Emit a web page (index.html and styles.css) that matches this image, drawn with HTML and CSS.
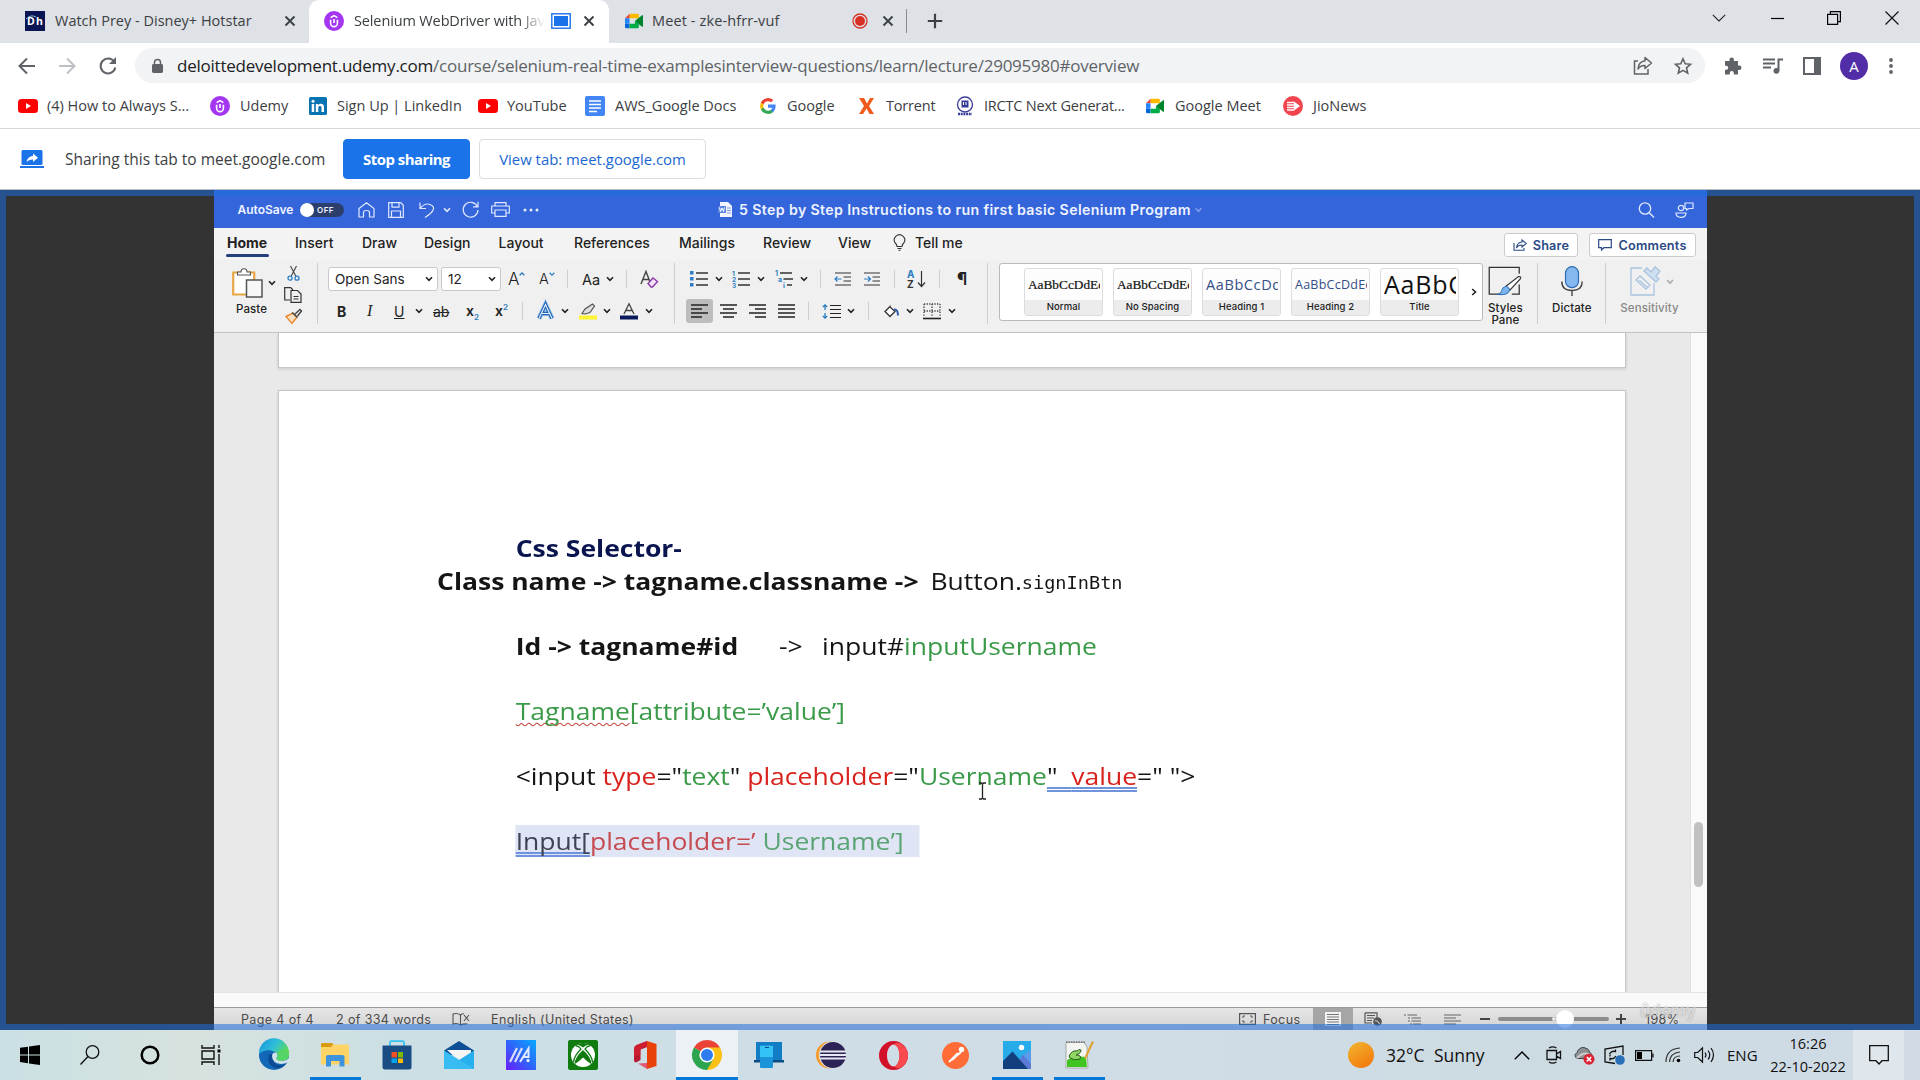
FILE: index.html
```html
<!DOCTYPE html>
<html lang="en">
<head>
<meta charset="utf-8">
<title>Selenium WebDriver with Java</title>
<link rel="stylesheet" href="styles.css">
</head>
<body>
<svg width="0" height="0" class="defs">
  <defs>
    <symbol id="chev" viewBox="0 0 8 6"><path d="M1 1.2 4 4.4 7 1.2" fill="none" stroke="currentColor" stroke-width="1.6"/></symbol>
    <symbol id="close" viewBox="0 0 12 12"><path d="M1.5 1.5l9 9M10.5 1.5l-9 9" fill="none" stroke="#3c4043" stroke-width="1.9"/></symbol>
    <symbol id="udemy" viewBox="0 0 20 20"><circle cx="10" cy="10" r="10" fill="#a435f0"/><path d="M6.6 8.800v3.400a3.400 3.400 0 0 0 6.800 0V8.800M6.600 6.600 10 4.600l3.400 2M10 8v4" fill="none" stroke="#fff" stroke-width="1.600"/></symbol>
    <symbol id="yt" viewBox="0 0 20 20"><rect y="3" width="20" height="14" rx="3.500" fill="#f00"/><path d="M8 7l5 3-5 3z" fill="#fff"/></symbol>
    <symbol id="meet" viewBox="0 0 20 20"><path d="M5 2h9q1.400 0 1.400 1.400V7H5z" fill="#ffba00"/><path d="M5 2v5H0z" fill="#ea4335"/><path d="M0 7h5v6H0z" fill="#2684fc"/><path d="M0 13h5v5H1.400Q0 18 0 16.600z" fill="#0066da"/><path d="M5 13h6v-3l4.400 3v3.600q0 1.400-1.400 1.400H5z" fill="#00ac47"/><path d="M11 10l8-6.400q1-.5 1 .6v11.600q0 1-1 .6z" fill="#00832d"/></symbol>
  </defs>
</svg>

<header class="tabstrip">
  <svg width="20" height="20" viewBox="0 0 20 20"><rect width="20" height="20" fill="#0b1553"/><text x="2" y="14" font-family="Open Sans, sans-serif" font-size="10.500" font-weight="700" fill="#fff" textLength="16">Dh</text><path d="M1 8q5-5 10-2" fill="none" stroke="#7db8e8"/></svg>
  <span class="tab-title t1">Watch Prey - Disney+ Hotstar</span>
  <svg width="12" height="12"><use href="#close"/></svg>
  <div class="active-tab">
    <svg width="20" height="20"><use href="#udemy"/></svg>
    <span class="tab-title t2">Selenium WebDriver with Java</span>
    <svg width="20" height="16" viewBox="0 0 20 16"><rect x=".8" y=".8" width="18.400" height="14.400" fill="#fff" stroke="#1a73e8" stroke-width="1.400"/><rect x="3" y="3" width="14" height="10" fill="#1a73e8"/></svg>
    <svg width="12" height="12"><use href="#close"/></svg>
  </div>
  <svg width="20" height="18"><use href="#meet"/></svg>
  <span class="tab-title t3">Meet - zke-hfrr-vuf</span>
  <svg width="16" height="16" viewBox="0 0 16 16"><circle cx="8" cy="8" r="7" fill="none" stroke="#d93025" stroke-width="1.300"/><circle cx="8" cy="8" r="5" fill="#d93025"/></svg>
  <svg width="12" height="12"><use href="#close"/></svg>
  <i class="tab-sep"></i>
  <svg width="16" height="16" viewBox="0 0 16 16"><path d="M8 .8v14.400M.8 8h14.400" stroke="#3c4043" stroke-width="2.200"/></svg>
  <svg class="win" width="14" height="8" viewBox="0 0 14 8"><path d="M.8.8 7 7 13.200.8" fill="none" stroke="#222" stroke-width="1.100"/></svg>
  <svg class="win" width="13" height="13" viewBox="0 0 13 13"><path d="M0 6.500h13" stroke="#000" stroke-width="1.200"/></svg>
  <svg class="win" width="14" height="14" viewBox="0 0 14 14"><path d="M.6 3.400h10v10H.6zM3.400 3V.6h10v10H11" fill="none" stroke="#000" stroke-width="1.200"/></svg>
  <svg class="win" width="14" height="14" viewBox="0 0 14 14"><path d="M.5.5l13 13M13.500.5l-13 13" stroke="#111" stroke-width="1.200"/></svg>
</header>

<nav class="toolbar">
  <svg width="18" height="18" viewBox="0 0 18 18"><path d="M17 9H2M9 1.500 1.500 9 9 16.500" fill="none" stroke="#5f6368" stroke-width="2"/></svg>
  <svg width="18" height="18" viewBox="0 0 18 18"><path d="M1 9h15M9 1.500 16.500 9 9 16.500" fill="none" stroke="#bdc1c6" stroke-width="2"/></svg>
  <svg width="18" height="18" viewBox="0 0 18 18"><path d="M15.300 5A7.400 7.400 0 1 0 16.300 10.500" fill="none" stroke="#5f6368" stroke-width="2"/><path d="M17 0v7h-7z" fill="#5f6368"/></svg>
  <div class="omnibox">
    <svg width="11" height="14" viewBox="0 0 11 14"><rect y="5" width="11" height="9" rx="1.400" fill="#5f6368"/><path d="M2.500 6V3.600a3 3 0 0 1 6 0V6" fill="none" stroke="#5f6368" stroke-width="1.500"/></svg>
    <span class="url"><b>deloittedevelopment.udemy.com</b>/course/selenium-real-time-examplesinterview-questions/learn/lecture/29095980#overview</span>
    <svg width="20" height="19" viewBox="0 0 20 19"><path d="M5 5H1.500v13H15v-5" fill="none" stroke="#5f6368" stroke-width="1.500"/><path d="M12 1.500 18.500 7 12 12.500V9.500Q7.500 9.300 5 13 5.500 5.500 12 4.700z" fill="none" stroke="#5f6368" stroke-width="1.500" stroke-linejoin="round"/></svg>
    <svg width="18" height="18" viewBox="0 0 18 18"><path d="M9 1.800l2.200 5 5.300.5-4 3.600 1.200 5.300L9 13.400l-4.700 2.800 1.200-5.300-4-3.600 5.300-.5z" fill="none" stroke="#5f6368" stroke-width="1.600"/></svg>
  </div>
  <svg width="18" height="18" viewBox="0 0 18 18"><path d="M1 4h4.500V2.600a2.200 2.200 0 0 1 4.400 0V4H14v4.500h1.300a2.200 2.200 0 0 1 0 4.400H14V17.500H9.800V16a2 2 0 0 0-4 0v1.500H1v-4.700h1.200a2 2 0 0 0 0-4H1z" fill="#5f6368"/></svg>
  <svg width="20" height="16" viewBox="0 0 20 16"><path d="M0 1.500h12M0 5.500h12M0 9.500h8M15.500 13V1.500H20" fill="none" stroke="#5f6368" stroke-width="2"/><circle cx="13.400" cy="12.800" r="2.900" fill="#5f6368"/></svg>
  <svg width="18" height="18" viewBox="0 0 18 18"><path d="M1 1h16v16H1z" fill="none" stroke="#5f6368" stroke-width="2"/><path d="M11 1h6v16h-6z" fill="#5f6368"/></svg>
  <span class="avatar">A</span>
  <svg width="4" height="16" viewBox="0 0 4 16"><g fill="#5f6368"><circle cx="2" cy="2" r="1.900"/><circle cx="2" cy="8" r="1.900"/><circle cx="2" cy="14" r="1.900"/></g></svg>
</nav>

<nav class="bookmarks">
  <svg width="20" height="20"><use href="#yt"/></svg><span class="b1">(4) How to Always S...</span>
  <svg width="20" height="20"><use href="#udemy"/></svg><span class="b2">Udemy</span>
  <svg width="18" height="18" viewBox="0 0 18 18"><rect width="18" height="18" rx="1.500" fill="#0a73b1"/><g fill="#fff"><path d="M2.700 7h2.500v8H2.700zM6.800 7h2.400v1.200C10.800 6 15 6.400 15 10v5h-2.500v-4.300c0-2.400-3.200-2.200-3.200 0V15H6.800z"/><circle cx="4" cy="4.200" r="1.500"/></g></svg><span class="b3">Sign Up | LinkedIn</span>
  <svg width="20" height="20"><use href="#yt"/></svg><span class="b4">YouTube</span>
  <svg width="20" height="20" viewBox="0 0 20 20"><rect width="20" height="20" rx="2" fill="#4285f4"/><path d="M4 5h12M4 8.500h12M4 12h12M4 15.500h8" stroke="#fff" stroke-width="1.700"/></svg><span class="b5">AWS_Google Docs</span>
  <svg width="16" height="16" viewBox="0 0 18 18"><path d="M17.600 9.200q0-.9-.2-1.800H9v3.500h4.800a4.100 4.100 0 0 1-1.800 2.700v2.200h2.900a8.800 8.800 0 0 0 2.700-6.600z" fill="#4285f4"/><path d="M9 18a8.600 8.600 0 0 0 6-2.200l-3-2.200A5.400 5.400 0 0 1 4 10.700H1V13a9 9 0 0 0 8 5z" fill="#34a853"/><path d="M4 10.700a5.400 5.400 0 0 1 0-3.400V5H1a9 9 0 0 0 0 8z" fill="#fbbc05"/><path d="M9 3.600c1.300 0 2.500.5 3.400 1.300L15 2.300A9 9 0 0 0 1 5l3 2.300A5.400 5.400 0 0 1 9 3.600z" fill="#ea4335"/></svg><span class="b6">Google</span>
  <svg width="15" height="16" viewBox="0 0 15 16"><path d="M0 0h5l3 5.500L11 0h4l-5 8 5 8h-4.500L7.500 10.500 4 16H0l5-8z" fill="#f05a1a"/></svg><span class="b7">Torrent</span>
  <svg width="20" height="20" viewBox="0 0 20 20"><circle cx="10" cy="8.500" r="7.500" fill="#fff" stroke="#3b3f98" stroke-width="1.300"/><path d="M6.500 4.500h7v7h-7z" fill="#343a95"/><path d="M8 6h1v3H8zm2.500 0h1v3h-1z" fill="#fff"/><path d="M3 18h14" stroke="#3b3f98" stroke-width="2.500" stroke-dasharray="2 .7"/></svg><span class="b8">IRCTC Next Generat...</span>
  <svg width="20" height="18"><use href="#meet"/></svg><span class="b9">Google Meet</span>
  <svg width="20" height="20" viewBox="0 0 20 20"><circle cx="10" cy="10" r="10" fill="#f0444f"/><path d="M4 6.500h7M4 9h7M4 11.500h7M4 14h7" stroke="#fff" stroke-width="1.400"/><path d="M11 5.500 17 10l-6 4.500z" fill="#fff"/></svg><span class="b10">JioNews</span>
</nav>

<section class="infobar">
  <svg width="24" height="18" viewBox="0 0 24 18"><rect x="1.500" width="21" height="15" rx="1.500" fill="#1a73e8"/><path d="M0 16h24v2H0z" fill="#1a73e8"/><path d="M13 3.500l5 4.300-5 4.200V9.500q-4-.3-6.500 2.500Q7.500 6.500 13 6z" fill="#fff"/></svg>
  <span class="share-note">Sharing this tab to meet.google.com</span>
  <button class="btn primary"><span>Stop sharing</span></button>
  <button class="btn"><span>View tab: meet.google.com</span></button>
</section>

<main class="stage">
  <div class="word">
    <div class="titlebar">
      <span class="autosave">AutoSave</span>
      <span class="toggle"><i></i>OFF</span>
      <svg width="17" height="16" viewBox="0 0 17 16"><path d="M1 6.500 8.500.8 16 6.500V15h-4.500v-4.500q0-2-3-2t-3 2V15H1z" fill="none" stroke="#dfe8ff" stroke-width="1.200"/></svg>
      <svg width="16" height="16" viewBox="0 0 16 16"><path d="M.7.7h12l2.600 2.600v12H.7zM4 .7v4.500h7V.7M3.500 15V9h9v6" fill="none" stroke="#dfe8ff" stroke-width="1.200"/></svg>
      <svg width="16" height="16" viewBox="0 0 16 16"><path d="M1 .5V6.500H7M1 6.500Q6 .5 11 2.500T14 8Q13 11 6 15.500" fill="none" stroke="#dfe8ff" stroke-width="1.200"/></svg>
      <svg class="pale" width="8" height="6"><use href="#chev"/></svg>
      <svg width="17" height="17" viewBox="0 0 17 17"><path d="M15.300 5.500A7.400 7.400 0 1 0 16 9M16 .8v5h-5" fill="none" stroke="#dfe8ff" stroke-width="1.200"/></svg>
      <svg width="19" height="15" viewBox="0 0 19 15"><path d="M4 4V.7h11V4M4 11H.7V4h17.600v7H15M4 8h11v6.300H4z" fill="none" stroke="#dfe8ff" stroke-width="1.200"/></svg>
      <svg width="16" height="4" viewBox="0 0 16 4"><g fill="#e8efff"><circle cx="2" cy="2" r="1.500"/><circle cx="8" cy="2" r="1.500"/><circle cx="14" cy="2" r="1.500"/></g></svg>
      <svg width="14" height="15" viewBox="0 0 14 15"><path d="M2 0h8l4 4v11H2z" fill="#f2f5ff"/><rect y="4" width="8" height="7" fill="#5d86df"/><path d="M1.500 5.500l1 4L4 6l1.500 3.500 1-4" fill="none" stroke="#fff"/><path d="M9 6h4M9 8.500h4M9 11h4" stroke="#7c9be6"/></svg>
      <b class="doc-title">5 Step by Step Instructions to run first basic Selenium Program</b>
      <svg class="faint" width="9" height="6"><use href="#chev"/></svg>
      <svg width="17" height="16" viewBox="0 0 17 16"><circle cx="7" cy="6.500" r="5.700" fill="none" stroke="#dfe8ff" stroke-width="1.300"/><path d="M11 10.500l5 5" stroke="#dfe8ff" stroke-width="1.400"/></svg>
      <svg width="19" height="16" viewBox="0 0 19 16"><g fill="none" stroke="#dfe8ff" stroke-width="1.200"><circle cx="6" cy="6" r="2.700"/><path d="M1 11h10q0 4.300-5 4.300T1 11zM10 1h8v5.500h-4L11.500 8V6.500H10z"/></g></svg>
    </div>
    <div class="ribbon-tabs">
      <b class="cur">Home</b><span>Insert</span><span>Draw</span><span>Design</span><span>Layout</span><span>References</span><span>Mailings</span><span>Review</span><span>View</span>
      <svg width="13" height="16" viewBox="0 0 13 16"><path d="M4 11.500Q4 9.500 2.200 8A5.200 5.200 0 1 1 10.800 8Q9 9.500 9 11.500zM4.500 13.500h4M5.500 15.300h2" fill="none" stroke="#333" stroke-width="1.100"/></svg>
      <span>Tell me</span>
      <button class="wbtn"><svg width="14" height="12" viewBox="0 0 14 12"><path d="M1 4v7.300h10V9M9 1l4.300 3.500L9 8V6Q5 6 3.500 9 4 3.500 9 3z" fill="none" stroke="#2b4a86" stroke-width="1.100"/></svg>Share</button>
      <button class="wbtn"><svg width="14" height="12" viewBox="0 0 14 12"><path d="M.7.7h12.600v8H6L3.500 11V8.700H.7z" fill="none" stroke="#2b4a86" stroke-width="1.200"/></svg>Comments</button>
    </div>
    <div class="ribbon">
      <div class="g-paste">
        <svg width="31" height="30" viewBox="0 0 31 30"><path d="M1.200 4.500h21v22h-21z" fill="#fff" stroke="#e8a646" stroke-width="2.200"/><path d="M5.500 7V4H9q0-3.200 3-3.200T15 4h3.500v3z" fill="#fff" stroke="#555" stroke-width="1.100"/><path d="M14.500 12h15.500v17H14.500z" fill="#f7f7f7" stroke="#555" stroke-width="1.500"/></svg>
        <svg width="8" height="6"><use href="#chev"/></svg>
        <span class="cap">Paste</span>
      </div>
      <div class="g-clip">
        <svg width="13" height="15" viewBox="0 0 13 15"><path d="M3.500 0 9 10.500M9.500 0 4 10.500" stroke="#444" stroke-width="1.100"/><g fill="none" stroke="#2b7dc4" stroke-width="1.300"><circle cx="3" cy="12.200" r="2"/><circle cx="10" cy="12.200" r="2"/></g></svg>
        <svg width="18" height="16" viewBox="0 0 18 16"><path d="M6 13H.7V.7h6L9 3M7 3.500h6.500L17 7v8.300H7z" fill="none" stroke="#333" stroke-width="1.200"/><path d="M9.500 9.500h5M9.500 12h5" stroke="#333"/></svg>
        <svg width="18" height="15" viewBox="0 0 18 15"><path d="M2 7.500 9 4l4 4-5 6.500z" fill="#fbe0c0" stroke="#e8892f" stroke-width="1.400"/><path d="M8 3.500l5.500 5M11 5l5-4.500 1.500 1.500-4 5" fill="none" stroke="#444" stroke-width="1.400"/></svg>
      </div>
      <i class="vsep big"></i>
      <div class="g-font">
        <div class="row r-font1">
          <span class="combo">Open Sans<svg width="8" height="6"><use href="#chev"/></svg></span>
          <span class="combo">12<svg width="8" height="6"><use href="#chev"/></svg></span>
          <span class="ic">A<svg width="6" height="4" viewBox="0 0 6 4"><path d="M.6 3.300 3 1l2.400 2.300" fill="none" stroke="#2b7dc4" stroke-width="1.300"/></svg></span>
          <span class="ic sm">A<svg width="6" height="4" viewBox="0 0 6 4"><path d="M.6.8 3 3.100 5.400.8" fill="none" stroke="#2b7dc4" stroke-width="1.300"/></svg></span>
          <i class="vsep"></i>
          <span class="aa">Aa</span>
          <svg width="8" height="6"><use href="#chev"/></svg>
          <i class="vsep"></i>
          <svg width="19" height="18" viewBox="0 0 19 18"><path d="M1 14 6 1.500 10 12M2.500 9.500H9" fill="none" stroke="#444" stroke-width="1.400"/><path d="M8 13.500l5-5.500 4.500 3.500-5 5.500H11z" fill="#f3e3f8" stroke="#8e3ba6" stroke-width="1.400"/></svg>
        </div>
        <div class="row r-font2">
          <b class="fb">B</b><i class="fi">I</i><u class="fu">U</u>
          <svg width="8" height="6"><use href="#chev"/></svg>
          <s class="fs">ab</s>
          <b class="fx">x<sub>2</sub></b><b class="fx">x<sup>2</sup></b>
          <i class="vsep"></i>
          <svg width="17" height="17" viewBox="0 0 17 17"><path d="M2 15.500 8.500 1.500 15 15.500M5 10.500h7" fill="none" stroke="#9cc6f1" stroke-width="5"/><path d="M2 15.500 8.500 1.500 15 15.500M5 10.500h7" fill="none" stroke="#2768b5" stroke-width="3.400"/><path d="M2 15.500 8.500 1.500 15 15.500M5 10.500h7" fill="none" stroke="#e8f2fc" stroke-width="1.100"/></svg>
          <svg width="8" height="6"><use href="#chev"/></svg>
          <svg width="18" height="17" viewBox="0 0 18 17"><path d="M3 10.500 6 6 13.500 1l2 2L11 9.500 6 11z" fill="#ddd" stroke="#555" stroke-width="1.200"/><path d="M0 12.500h18v4H0z" fill="#fdf434"/></svg>
          <svg width="8" height="6"><use href="#chev"/></svg>
          <svg width="18" height="17" viewBox="0 0 18 17"><path d="M4 11 9 .8 14 11M5.500 7.500h7" fill="none" stroke="#444" stroke-width="1.300"/><path d="M0 12.500h18v4H0z" fill="#0b1a5e"/></svg>
          <svg width="8" height="6"><use href="#chev"/></svg>
        </div>
      </div>
      <i class="vsep big"></i>
      <div class="g-para">
        <div class="row r-para1">
          <svg width="18" height="16" viewBox="0 0 18 16"><path d="M0 0h3.500v3.500H0zM0 6h3.500v3.500H0zM0 12h3.500v3.500H0z" fill="#2b7dc4"/><path d="M6 2h12M6 8h12M6 14h12" stroke="#333" stroke-width="1.300"/></svg>
          <svg width="8" height="6"><use href="#chev"/></svg>
          <svg width="18" height="17" viewBox="0 0 18 17"><g fill="#2b7dc4" font-family="Inter, sans-serif" font-size="6.500" font-weight="700"><text x="0" y="5">1</text><text x="0" y="11">2</text><text x="0" y="17">3</text></g><path d="M6 2h12M6 8h12M6 14h12" stroke="#333" stroke-width="1.300"/></svg>
          <svg width="8" height="6"><use href="#chev"/></svg>
          <svg width="18" height="17" viewBox="0 0 18 17"><g fill="#2b7dc4" font-family="Inter, sans-serif" font-size="7" font-weight="700"><text x="0" y="5">1</text><text x="3" y="11">a</text><text x="8" y="17">i</text></g><path d="M5 2h12M8.500 8H18M12 14h5" stroke="#333" stroke-width="1.300"/></svg>
          <svg width="8" height="6"><use href="#chev"/></svg>
          <i class="vsep"></i>
          <svg width="17" height="14" viewBox="0 0 17 14"><path d="M1 1h16M9.500 5H17M9.500 9H17M1 13h16" stroke="#333" stroke-width="1.200"/><path d="M7.500 7H1M3.500 4.500 1 7l2.500 2.500" fill="none" stroke="#2b7dc4" stroke-width="1.200"/></svg>
          <svg width="17" height="14" viewBox="0 0 17 14"><path d="M1 1h16M9.500 5H17M9.500 9H17M1 13h16" stroke="#333" stroke-width="1.200"/><path d="M1 7h6.500M5 4.500 7.500 7 5 9.500" fill="none" stroke="#2b7dc4" stroke-width="1.200"/></svg>
          <i class="vsep"></i>
          <svg width="19" height="18" viewBox="0 0 19 18"><g font-family="Inter, sans-serif" font-size="10" font-weight="700"><text x="0" y="8" fill="#2b7dc4">A</text><text x="0" y="17.500" fill="#333">Z</text></g><path d="M14.500 1v15M11 12.500l3.500 4 3.500-4" fill="none" stroke="#333" stroke-width="1.200"/></svg>
          <i class="vsep"></i>
          <span class="pil">¶</span>
        </div>
        <div class="row r-para2">
          <span class="on"><svg width="18" height="14" viewBox="0 0 18 14"><path d="M0 1h17M0 5h11M0 9h17M0 13h11" stroke="#222" stroke-width="1.300"/></svg></span>
          <svg width="17" height="14" viewBox="0 0 17 14"><path d="M0 1h17M3 5h11M0 9h17M3 13h11" stroke="#222" stroke-width="1.300"/></svg>
          <svg width="17" height="14" viewBox="0 0 17 14"><path d="M0 1h17M6 5h11M0 9h17M6 13h11" stroke="#222" stroke-width="1.300"/></svg>
          <svg width="17" height="14" viewBox="0 0 17 14"><path d="M0 1h17M0 5h17M0 9h17M0 13h17" stroke="#222" stroke-width="1.300"/></svg>
          <i class="vsep"></i>
          <svg width="19" height="15" viewBox="0 0 19 15"><path d="M8 1.500h11M8 5.500h11M8 9.500h11M8 13.500h11" stroke="#222" stroke-width="1.200"/><path d="M3 6V1M.8 3 3 .8 5.200 3M3 9v5M.8 12 3 14.200 5.200 12" fill="none" stroke="#2b7dc4" stroke-width="1.300"/></svg>
          <svg width="8" height="6"><use href="#chev"/></svg>
          <i class="vsep"></i>
          <svg width="15" height="13" viewBox="0 0 15 13"><path d="M5.500 2 1 6.500 6 11.500 11 6.500 6 2V.5" fill="#fff" stroke="#333" stroke-width="1.300"/><path d="M10 4.500q4-.5 4 6" fill="none" stroke="#2a5da8" stroke-width="2"/></svg>
          <svg width="8" height="6"><use href="#chev"/></svg>
          <svg width="18" height="17" viewBox="0 0 18 17"><path d="M1 1h16M1 8h16M1 1v13M9 1v13M17 1v13" fill="none" stroke="#444" stroke-width="1.300" stroke-dasharray="1.300 1.300"/><path d="M0 15.500h18" stroke="#222" stroke-width="1.600"/></svg>
          <svg width="8" height="6"><use href="#chev"/></svg>
        </div>
      </div>
      <i class="vsep big"></i>
      <div class="gallery">
        <div class="card"><span class="smp serif">AaBbCcDdEe</span><span class="lbl">Normal</span></div>
        <div class="card"><span class="smp serif">AaBbCcDdEe</span><span class="lbl">No Spacing</span></div>
        <div class="card"><span class="smp h1">AaBbCcDd</span><span class="lbl">Heading 1</span></div>
        <div class="card"><span class="smp h2">AaBbCcDdEe</span><span class="lbl">Heading 2</span></div>
        <div class="card"><span class="smp ttl">AaBbC</span><span class="lbl">Title</span></div>
        <svg width="6" height="8" viewBox="0 0 6 8"><path d="M1.200 1 4.500 4 1.200 7" fill="none" stroke="#222" stroke-width="1.600"/></svg>
      </div>
      <div class="tall">
        <svg width="34" height="31" viewBox="0 0 34 31"><path d="M15 29H.7V1.500h31V8M31.700 19v10H24" fill="none" stroke="#333" stroke-width="1.300"/><path d="M18 21 31 11q3-.5 2 2L22 25z" fill="#fff" stroke="#333" stroke-width="1.200"/><path d="M9 29.500q4-.5 4.500-4T18 21q4 1 3.500 4.500-1 5-12.500 4z" fill="#7db4ec" stroke="#2b6cb5"/></svg>
        <span class="cap">Styles<br>Pane</span>
      </div>
      <i class="vsep big"></i>
      <div class="tall">
        <svg width="22" height="30" viewBox="0 0 22 30"><rect x="4.500" y=".7" width="13" height="21" rx="6.500" fill="#85b8ee" stroke="#2b6cb5" stroke-width="1.200"/><path d="M.8 15.500q0 9 10.200 9t10.200-9M11 24.500V30" fill="none" stroke="#444" stroke-width="1.400"/></svg>
        <span class="cap">Dictate</span>
      </div>
      <i class="vsep big"></i>
      <div class="tall dis">
        <svg width="50" height="30" viewBox="0 0 50 30"><g fill="none" stroke="#a9c4df" stroke-width="1.300"><path d="M12 2H1v27h23V17"/><path d="M6 14l4-4 10 9-4 4zM9 14l8 7"/><path d="M14 5l3-3 4 4 4-5 5 4-4 5 3 3-3 3z" fill="#cfe0f0"/></g><path d="M37 14l3 3 3-3" fill="none" stroke="#aaa" stroke-width="1.600"/></svg>
        <span class="cap">Sensitivity</span>
      </div>
    </div>
    <div class="canvas">
      <div class="pages">
        <div class="page first"></div>
        <div class="page second">
          <div class="body-text">
            <p class="in navy"><b>Css Selector-</b></p>
            <p class="l2"><b>Class name -&gt; tagname.classname -&gt;</b><span>Button.</span><code>signInBtn</code></p>
            <p class="in l3"><b>Id -&gt; tagname#id</b><span>-&gt;</span><span>input#<em>inputUsername</em></span></p>
            <p class="in"><em><span class="wavy">Tagname</span>[attribute=’value’]</em></p>
            <p class="in">&lt;input <strong>type</strong>="<em>text</em>" <strong>placeholder</strong>="<em>Username</em><span class="dbl">"  <strong>value</strong></span>=" "&gt;</p>
            <p class="in"><span class="sel"><span class="dbl">Input[</span><strong>placeholder=’</strong> <em>Username’]</em></span></p>
          </div>
          <svg class="ibeam" width="9" height="18" viewBox="0 0 9 18"><path d="M1 1h2.500l1 1 1-1H8M4.500 2v14M1 17h2.500l1-1 1 1H8" fill="none" stroke="#222" stroke-width="1.300"/></svg>
        </div>
      </div>
      <div class="vscroll"><i></i></div>
    </div>
    <div class="hscroll"></div>
    <div class="status">
      <span class="s1">Page 4 of 4</span><span class="s2">2 of 334 words</span>
      <svg width="19" height="13" viewBox="0 0 19 13"><path d="M8.500 2Q5-.5 1 1v10q4-1.500 7.500 1zM8.500 2Q10 .5 12 .7M8.500 12q3-1.500 7-1" fill="none" stroke="#555" stroke-width="1.100"/><path d="M12 2l5 6M17 2l-5 6" stroke="#555" stroke-width="1.100"/></svg>
      <span class="s3">English (United States)</span>
      <svg width="17" height="12" viewBox="0 0 17 12"><path d="M.6.6h15.800v10.800H.6z" fill="none" stroke="#555" stroke-width="1.200"/><path d="M4 5V3h2M11 3h2v2M13 7v2h-2M6 9H4V7" fill="none" stroke="#555"/></svg>
      <span class="s4">Focus</span>
      <span class="view-on"><svg width="16" height="14" viewBox="0 0 16 14"><path d="M0 0h16v14H0z" fill="#f2f2f2"/><path d="M2 2.500h12M2 5h12M2 7.500h12M2 10h12M2 12.500h12" stroke="#777"/></svg></span>
      <svg width="19" height="14" viewBox="0 0 19 14"><path d="M1 .8h12v5M1 .8V11h7" fill="none" stroke="#555" stroke-width="1.200"/><path d="M3 3.500h8M3 6h7M3 8.500h5" stroke="#555"/><circle cx="13.500" cy="9.500" r="4.300" fill="#555"/><path d="M11 8.500l3 1 1.500 2.500" stroke="#ddd" fill="none"/></svg>
      <svg width="17" height="11" viewBox="0 0 17 11"><path d="M0 1h2M3.500 1H13M4 4h2M7.500 4H17M4 7h2M7.500 7H17M6 10h2M9 10h8" stroke="#666" stroke-width="1.200"/></svg>
      <svg width="17" height="11" viewBox="0 0 17 11"><path d="M0 1h17M0 4h12M0 7h17M0 10h12" stroke="#666" stroke-width="1.200"/></svg>
      <svg width="10" height="4" viewBox="0 0 10 4"><path d="M0 2h10" stroke="#444" stroke-width="2"/></svg>
      <svg width="111" height="18" viewBox="0 0 111 18"><path d="M2 9h107" stroke="#8b8b8b" stroke-width="4" stroke-linecap="round"/><circle cx="56" cy="9" r="2" fill="#e6e6e6"/><circle cx="67" cy="9" r="9" fill="#fff"/></svg>
      <svg width="10" height="10" viewBox="0 0 10 10"><path d="M0 5h10M5 0v10" stroke="#444" stroke-width="2"/></svg>
      <span class="s5">198%</span>
    </div>
    <span class="mark">ûdemy</span>
  </div>
  <div class="share-frame"></div>
</main>

<footer class="taskbar">
  <div class="cell"><svg width="20" height="20" viewBox="0 0 20 20"><path d="M0 2.800 8 1.700v7.700H0zM9 1.500 20 0v9.400H9zM0 10.400h8v7.800L0 17zM9 10.400h11V20L9 18.500z"/></svg></div>
  <div class="cell"><svg width="20" height="20" viewBox="0 0 20 20"><circle cx="12.500" cy="7" r="6.300" fill="none" stroke="#111" stroke-width="1.300"/><path d="M8 11.500.5 19.500" stroke="#111" stroke-width="1.400"/></svg></div>
  <div class="cell"><svg width="20" height="20" viewBox="0 0 20 20"><circle cx="10" cy="10" r="8.300" fill="none" stroke="#000" stroke-width="2.500"/></svg></div>
  <div class="cell"><svg width="21" height="20" viewBox="0 0 21 20"><path d="M1 0v3h12V0M1 20v-3h12v3M1 6h12v8H1zM18 0v3M18 9v11" fill="none" stroke="#111" stroke-width="1.400"/><path d="M16.500 4.500h3v3h-3z"/></svg></div>
  <div class="cell"><svg width="30" height="30" viewBox="0 0 30 30"><defs><linearGradient id="e1" x2="1" y2=".5"><stop offset="0" stop-color="#1a8fe0"/><stop offset=".55" stop-color="#2fc0d8"/><stop offset="1" stop-color="#5fdc50"/></linearGradient></defs><circle cx="15" cy="15" r="15" fill="#1268b8"/><path d="M0 13.500A15 15 0 0 1 30 13q.5 6.500-6 7.500-6 .5-6.500-2.200Q20 15 17 12.500 9 7 0 13.500z" fill="url(#e1)"/><path d="M10 15q-3 10 7 13 6 1 11-5-6 4-11 1-4-3-3-8.500Q12 13 10 15z" fill="#0c4a94"/><path d="M17.500 12.700q-4-.7-4.500 3.300 0 7 9 8 4 0 7-2l1 1v-5q-2.500 3-7 2.700-6-.2-5.500-2.700 2-2.700 0-5.300z" fill="#cfe1e8"/><path d="M30 14q0 6-6 6.500-6.500.5-6.500-2 3-3 0-6L24 9z" fill="#55d566"/></svg></div>
  <div class="cell run"><svg width="28" height="24" viewBox="0 0 28 24"><path d="M0 1.500Q0 0 1.500 0H11l2 2-1.500 3H0z" fill="#d99a0b"/><path d="M0 4h10l2-2.500h14.500Q28 1.500 28 3v18.500H0z" fill="#ffd466"/><path d="M5 23.500V14q0-2 2-2h14.500q2 0 2 2v9.500h-5V18H10v5.500z" fill="#3d94dc"/></svg></div>
  <div class="cell"><svg width="30" height="30" viewBox="0 0 30 30"><path d="M8 6V2.500Q8 1.200 9.300 1.200h11.400q1.300 0 1.300 1.300V6" fill="none" stroke="#37c1f2" stroke-width="1.800"/><path d="M.5 5.500h29V27q0 2.500-2.500 2.500H3Q.5 29.500.5 27z" fill="#1b4d85"/><path d="M9.500 12H15v5.500H9.500z" fill="#f25022"/><path d="M16 12h5v5.500h-5z" fill="#7fba00"/><path d="M9.500 18.500H15V23H9.500z" fill="#00a4ef"/><path d="M16 18.500h5V23h-5z" fill="#ffb900"/></svg></div>
  <div class="cell"><svg width="30" height="28" viewBox="0 0 30 28"><path d="M0 9.500 15 0l15 9.500V14H0z" fill="#0d4f94"/><path d="M3 9h24v8l-12 3z" fill="#f5f5f5"/><path d="M0 9.500 15 19l15-9.500V28H0z" fill="#28b0ee"/><path d="M0 9.500 30 28H0z" fill="#45c5f8" opacity=".6"/></svg></div>
  <div class="cell"><svg width="30" height="30" viewBox="0 0 30 30"><defs><linearGradient id="a1" x1="0" y1="1" x2="1" y2="0"><stop offset="0" stop-color="#6a1cf8"/><stop offset=".5" stop-color="#2f66fa"/><stop offset="1" stop-color="#06a8ff"/></linearGradient></defs><path d="M0 0h30v30H0z" fill="url(#a1)"/><path d="M4 22 11 8M9 22 16 8" stroke="#d5ddff" stroke-width="2.200"/><path d="M14 22 22.500 8.500V18M18 17h4" fill="none" stroke="#e5ebff" stroke-width="2"/><circle cx="22" cy="20.500" r="1.600" fill="#fff"/></svg></div>
  <div class="cell"><svg width="30" height="30" viewBox="0 0 30 30"><rect width="30" height="30" rx="2" fill="#107c10"/><circle cx="15" cy="15" r="12" fill="#fff"/><path d="M7.500 5q3.500-1 7.500 2.500Q19 4 22.500 5L15 2.500zM15 10q-8 7-8.500 14 1.500 0 8.500-6.500Q22 24 23.500 24 23 17 15 10z" fill="#107c10"/><path d="M7.500 5.500Q11 6 13 9 6 16 5.500 22M22.500 5.500Q19 6 17 9q7 7 7.500 13" fill="none" stroke="#107c10" stroke-width="1.300"/></svg></div>
  <div class="cell"><svg width="23" height="28" viewBox="0 0 23 28"><path d="M13 0l9.500 3v22L13 28z" fill="#e8420a"/><path d="M13 0v6L6.500 8.500V19L2 21.500Q0 21 0 19V8Q0 5 2.500 4z" fill="#b7172e"/><path d="M4 22.500 13 22v6z" fill="#e05a78"/><path d="M13 0v6L6.500 8.500V14L0 15V8Q0 5 2.500 4z" fill="#d23" opacity=".6"/></svg></div>
  <div class="cell cur"><svg width="30" height="30" viewBox="0 0 30 30"><path d="M15 15 2 7.500A15 15 0 0 1 28 7.500z" fill="#ea4335"/><path d="M15 15V7.500h13A15 15 0 0 1 15 30z" fill="#fbc116"/><path d="M2 7.500A15 15 0 0 0 15 30l6.500-11.300L15 15z" fill="#2da44e"/><circle cx="15" cy="15" r="7.600" fill="#fff"/><circle cx="15" cy="15" r="6" fill="#2f7cf0"/></svg></div>
  <div class="cell"><svg width="30" height="26" viewBox="0 0 30 26"><path d="M2 0h26v20H2z" fill="#127cc4"/><path d="M0 18h30v2.500H0z" fill="#0a4d84"/><rect x="6" y="3" width="13" height="23" rx="1" fill="#1b94da"/><path d="M6 4h13v11H6z" fill="#35c2f4"/><path d="M11 5.500h4" stroke="#0a4d84"/></svg></div>
  <div class="cell"><svg width="30" height="28" viewBox="0 0 30 28"><circle cx="13.500" cy="14" r="13.500" fill="#f79a26"/><circle cx="16.500" cy="14" r="13.700" fill="#d9dde3"/><circle cx="17" cy="14" r="13" fill="#2c2255"/><path d="M4 10.500h26M4 14h26M4 17.500h26" stroke="#e8e8f2" stroke-width="1.900"/></svg></div>
  <div class="cell"><svg width="29" height="29" viewBox="0 0 29 29"><path d="M14.500 0a14.500 14.500 0 1 0 0 29 14.500 14.500 0 1 0 0-29zm0 3.500c3.500 0 6 5 6 11s-2.500 11-6 11-6.500-5-6.500-11 3-11 6.500-11z" fill="#d3122a" fill-rule="evenodd"/><path d="M14.500 3.500q4-3 8-.5 6.500 4.500 6.500 11.500t-6.500 12q-4 2-8-1c3.500 0 6-5 6-11s-2.500-11-6-11z" fill="#fa4a50"/></svg></div>
  <div class="cell"><svg width="27" height="27" viewBox="0 0 27 27"><circle cx="13.500" cy="13.500" r="13.500" fill="#ff6c37"/><path d="M7 20l9-9M10 18l9-8" stroke="#fff" stroke-width="1.800"/><circle cx="19.500" cy="7.500" r="2.700" fill="#fff"/></svg></div>
  <div class="cell run"><svg width="28" height="28" viewBox="0 0 28 28"><path d="M0 0h28v28H0z" fill="#27abe9"/><path d="M11 28 20 13.500 28 22v6z" fill="#5b7ad6"/><path d="M28 9v14l-8-9z" fill="#5c9be8"/><path d="M0 20 9.500 10.500 25 28H0z" fill="#123f7d"/><circle cx="18.500" cy="6.500" r="2.700" fill="#fff"/></svg></div>
  <div class="cell run"><svg width="29" height="28" viewBox="0 0 29 28"><path d="M1 1.500h18L22 6l1 21H1z" fill="#f3f5f1" stroke="#a5aaa5"/><path d="M2 19q8-5 19-3l1 10H2z" fill="#3fc421"/><path d="M4 15q3-6 8-5 4-3 4 0-1 3-5 4 6 0 4 4-6 2-10-1z" fill="#8fd863" stroke="#2a5a1b" stroke-width="1"/><path d="M28 .5 20 17.500" stroke="#e3a12c" stroke-width="2"/><path d="M1 1h19" stroke="#777" stroke-width="1.600" stroke-dasharray="1.500 1"/></svg></div>
  <div class="tray">
    <i class="sun"></i><span class="k1">32°C</span><span class="k2">Sunny</span>
    <svg width="16" height="9" viewBox="0 0 16 9"><path d="M.8 8.200 8 1l7.200 7.200" fill="none" stroke="#000" stroke-width="1.400"/></svg>
    <svg width="16" height="18" viewBox="0 0 16 18"><path d="M3 2Q6.500-.3 10.500 2M3 16Q6.500 18.300 10.500 16M1 4.500h9.500v9H1zM10.500 8l4-2.500v7l-4-2.500" fill="none" stroke="#111" stroke-width="1.300"/></svg>
    <svg width="21" height="19" viewBox="0 0 21 19"><path d="M3 12.500q-4-3 0-6Q5 1 10 1.500q5 1 6 5 4 3 0 6z" fill="#8d9194" stroke="#444"/><path d="M3 12q8-8 14-2" stroke="#ccc" fill="none" stroke-width="2"/><circle cx="15" cy="13.200" r="5.500" fill="#dc2334"/><path d="M12.800 11l4.400 4.400M17.200 11l-4.400 4.400" stroke="#fff" stroke-width="1.500"/></svg>
    <svg width="21" height="20" viewBox="0 0 21 20"><path d="M19 10V1L1 4v13l10 1.500" fill="none" stroke="#111" stroke-width="1.300"/><path d="M5.500 9q2-3.500 6-2.500V4.500M12 11q-2 3.500-6 2.500v2M6 11.500V9.500" fill="none" stroke="#111" stroke-width="1.300"/><circle cx="16" cy="15" r="4.800" fill="#2a70b8"/></svg>
    <svg width="19" height="11" viewBox="0 0 19 11"><path d="M.6.6h16v9.800H.6zM18 3.500v4" fill="none" stroke="#111" stroke-width="1.200"/><path d="M2 2h5v7H2z"/></svg>
    <svg width="16" height="16" viewBox="0 0 16 16"><path d="M1 15Q1 2 15 1M4.500 15Q5 6 15 5M8 15q.5-6 7-6" fill="none" stroke="#333" stroke-width="1.200"/><circle cx="13.500" cy="13.500" r="1.800"/></svg>
    <svg width="21" height="16" viewBox="0 0 21 16"><path d="M.7 5.500h3L8.500 1v14l-4.800-4.500h-3z" fill="none" stroke="#111" stroke-width="1.200"/><path d="M11 5.500q2 2.500 0 5M14 3.500q3.500 4.500 0 9M17 1q5 7 0 14" fill="none" stroke="#111" stroke-width="1.200"/></svg>
    <span class="k3">ENG</span>
    <span class="clock"><span class="k4">16:26</span><span class="k5">22-10-2022</span></span>
    <span class="notif"><svg width="20" height="20" viewBox="0 0 20 20"><path d="M.7.7h18.600v15H13L10 19l-3-3.300H.7z" fill="none" stroke="#111" stroke-width="1.300"/></svg></span>
  </div>
</footer>
</body>
</html>
```
FILE: styles.css
```css
* { box-sizing: border-box; }
body {
  margin: 0;
  width: 1920px;
  height: 1080px;
  overflow: hidden;
  display: flex;
  flex-direction: column;
  background: #fff;
  font-family: "Open Sans", "Noto Sans", sans-serif;
  font-size: 15px;
  color: #3c4043;
}
svg { display: block; flex: none; overflow: visible; }
.defs { position: absolute; }
span, b { white-space: pre; }
button { font: inherit; padding: 0; }

/* Browser tabs */
.tabstrip {
  height: 43px;
  background: #dee1e6;
  display: grid;
  grid-template-columns: 30px 229px 25px 315px 28px 200px 30px 24px 21px 785px 59px 56px 58px 14px;
  padding: 0 0 2px 25px;
  align-items: center;
  font-size: 14.500px;
}
.active-tab {
  width: 300px;
  height: 43px;
  margin-bottom: -2px;
  background: #fff;
  border-radius: 10px 10px 0 0;
  display: grid;
  grid-template-columns: 30px 197px 32px 12px;
  padding: 0 0 2px 15px;
  align-items: center;
}
.tab-title { overflow: hidden; }
.t2 {
  width: 191px;
  letter-spacing: -0.130px;
  -webkit-mask-image: linear-gradient(90deg, #000 165px, transparent 191px);
  mask-image: linear-gradient(90deg, #000 165px, transparent 191px);
}
.t3 { letter-spacing: .12px; }
.tab-sep { width: 1px; height: 24px; background: #888c91; }
.win { margin-bottom: 5px; }

/* Address bar */
.toolbar {
  height: 45px;
  display: grid;
  grid-template-columns: 40px 41px 36px 1589px 39px 40px 37px 49px 4px;
  padding-left: 18px;
  align-items: center;
}
.omnibox {
  width: 1570px;
  height: 35px;
  border-radius: 18px;
  background: #f1f3f4;
  display: grid;
  grid-template-columns: 25px 1456px 41px 18px;
  padding-left: 17px;
  align-items: center;
}
.url { font-size: 17px; color: #5f6368; letter-spacing: -0.232px; }
.url b { font-weight: 400; color: #202124; }
.avatar {
  width: 28px;
  height: 28px;
  border-radius: 50%;
  background: #512da8;
  color: #fff;
  text-align: center;
  line-height: 28px;
}

/* Bookmarks */
.bookmarks {
  height: 41px;
  padding: 0 0 5px 18px;
  border-bottom: 1px solid #d5d7da;
  display: grid;
  grid-template-columns: 29px 163px 30px 69px 28px 141px 29px 78px 30px 145px 27px 72px 27px 69px 29px 161px 30px 108px 30px 60px;
  align-items: center;
  font-size: 14.500px;
}
.b7 { letter-spacing: -.2px; }
.b8 { letter-spacing: -.2px; }

/* Sharing notice */
.infobar {
  height: 61px;
  border-bottom: 1px solid #b9bec6;
  display: grid;
  grid-template-columns: 45px 278px 136px 227px;
  padding: 0 0 1px 20px;
  align-items: center;
  font-size: 15.500px;
}
.btn {
  height: 40px;
  border-radius: 4px;
  border: 1px solid #dadce0;
  background: #fff;
  color: #1967d2;
  font-size: 14.900px;
  font-weight: 500;
  text-align: center;
}
.btn.primary { width: 127px; background: #1a73e8; border-color: #1a73e8; color: #fff; font-weight: 700; letter-spacing: -.5px; }

/* Video area */
.stage { position: relative; height: 840px; background: #333; display: flex; padding-left: 214px; }
.share-frame { position: absolute; inset: 0; border: 6px solid rgba(27, 110, 221, .54); }
.word {
  position: relative;
  width: 1493px;
  height: 840px;
  display: flex;
  flex-direction: column;
  font-family: Inter, "Liberation Sans", sans-serif;
  color: #222;
  font-size: 14px;
}
.titlebar {
  height: 38px;
  padding: 1px 0 0 23.500px;
  background: #3465db;
  color: #eef3ff;
  display: grid;
  grid-template-columns: 62.500px 58px 30px 31px 24px 19px 29px 32px 195px 21px 455px 444px 37px 19px;
  align-items: center;
}
.autosave { font-size: 12px; font-weight: 600; }
.toggle {
  width: 44px;
  height: 14px;
  border-radius: 7px;
  background: #2c3f6c;
  font-size: 8px;
  font-weight: 600;
  letter-spacing: .5px;
  display: flex;
  align-items: center;
  gap: 3px;
}
.toggle i { width: 14px; height: 14px; border-radius: 50%; background: #fff; }
.doc-title { font-size: 14.200px; font-weight: 600; letter-spacing: .36px; }
.faint { color: #7d9cea; }
.pale { color: #dfe8ff; }

.ribbon-tabs {
  height: 32px;
  padding: 0 0 4px 13px;
  background: #f3f3f3;
  display: grid;
  grid-template-columns: 68px 67px 62px 74.500px 75.500px 105px 84px 75px 55px 22px 589px 85px 107px;
  align-items: center;
  font-weight: 500;
}
.cur { font-weight: 700; }
.ribbon-tabs .cur { position: relative; width: 42px; }
.ribbon-tabs .cur::after {
  content: "";
  position: absolute;
  left: -1px;
  right: 0;
  bottom: -6px;
  height: 3px;
  border-radius: 2px;
  background: #243f7c;
}
.wbtn {
  height: 24px;
  margin-top: 5px;
  border: 1px solid #ccc;
  border-radius: 3px;
  background: #fff;
  color: #2b4a86;
  font-size: 12.700px;
  letter-spacing: .2px;
  font-weight: 600;
  display: flex;
  align-items: center;
  justify-content: center;
  gap: 6px;
}
.wbtn:nth-of-type(1) { width: 74px; }

.ribbon {
  height: 73px;
  padding: 3px 0 9px 18px;
  background: #f0f0f0;
  border-bottom: 1px solid #c2c2c2;
  display: grid;
  grid-template-columns: 52px 33px 11px 346px 12px 301px 12px 489px 49px 15px 53px 14px 60px;
}
.vsep { width: 1px; height: 18px; background: #cfcfcf; }
.vsep.big { height: 61px; }
.cap { font-size: 11.500px; line-height: 12px; font-weight: 500; text-align: center; letter-spacing: .1px; }
.g-paste {
  display: grid;
  grid-template-columns: 36px 8px;
  grid-template-rows: 39px 13px;
  align-items: center;
}
.g-paste .cap { grid-column: 1 / 3; text-align: left; padding-left: 4px; }
.g-clip { display: flex; flex-direction: column; justify-content: space-between; align-items: center; width: 18px; padding: 3px 0 0; height: 61px; }
.row { display: grid; align-items: center; height: 32px; }
.r-font1 { grid-template-columns: 113px 67px 31px 28px 15px 24px 20px 14px 19px; }
.combo {
  height: 24px;
  width: 110px;
  border: 1px solid #c9c9c9;
  border-radius: 3px;
  background: #fff;
  padding: 0 4px 0 6px;
  display: flex;
  align-items: center;
  justify-content: space-between;
  font-size: 13.500px;
}
.combo + .combo { width: 60px; }
.ic { font-size: 17px; line-height: 20px; font-weight: 300; display: flex; }
.ic.sm { font-size: 14.500px; }
.ic svg { margin-top: 3px; }
.aa { font-size: 14.500px; }
.r-font2 { grid-template-columns: 30px 27px 20.500px 18.500px 33px 29px 27px 15px 24px 18px 24px 17px 25px 8px; padding-left: 9px; }
.fb { font-weight: 700; }
.fi { font-family: "Liberation Serif", serif; font-size: 16px; }
.fx { line-height: 18px; font-weight: 600; }
.fx sub, .fx sup { color: #2b7dc4; font-size: 8px; line-height: 0; }

.g-para .row { padding-left: 4px; }
.r-para1 { grid-template-columns: 25px 17px 25px 18px 25px 20px 14px 29px 31px 13px 32px 18px 12px; }
.r-para2 { grid-template-columns: 30px 29px 29px 30px 14px 25px 21px 16px 22px 17px 25px 8px; }
.on { width: 27px; height: 24px; border-radius: 3px; background: #bdbdbd; display: grid; place-content: center; margin-left: -4px; }
.pil { font-size: 17px; font-weight: 700; }

.gallery {
  width: 484px;
  height: 58px;
  border: 1px solid #bbb;
  border-radius: 3px;
  background: #fff;
  padding-left: 24px;
  display: grid;
  grid-template-columns: 89px 89px 89px 89px 91px 10px;
  align-items: center;
}
.card {
  width: 79px;
  height: 48px;
  border: 1px solid #dcdcdc;
  border-radius: 3px;
  overflow: hidden;
  display: grid;
  grid-template-rows: 31px 15px;
  background: #fdfdfd;
}
.smp { margin: 0 2px 0 3px; overflow: hidden; line-height: 31px; color: #111; }
.lbl { background: #ececec; font-size: 9.500px; font-weight: 500; text-align: center; line-height: 14px; letter-spacing: .1px; }
.serif { font: 13.300px/31px "Liberation Serif", serif; -webkit-text-stroke: .2px #111; }
.h1, .h2 { font-family: "Open Sans", sans-serif; color: #344f86; }
.h1 { font-size: 14.500px; letter-spacing: .6px; }
.h2 { font-size: 12.500px; letter-spacing: .25px; }
.ttl { font-family: "Open Sans", sans-serif; font-size: 25px; letter-spacing: .8px; }
.tall { display: flex; flex-direction: column; align-items: center; width: max-content; padding-top: 3px; gap: 6px; }
.tall svg { height: 30px; }
.dis { color: #888; }
.dis svg { margin-left: 11px; }

/* Document */
.canvas { height: 659px; display: flex; background: #e9e9e9; }
.pages { width: 1476px; padding-left: 64px; display: flex; flex-direction: column; gap: 22px; overflow: hidden; }
.page { width: 1348px; background: #fff; border: 1px solid #c6c6c6; box-shadow: 0 1px 3px rgba(0, 0, 0, .15); }
.page.first { height: 35px; border-top: 0; flex: none; }
.page.second { position: relative; height: 620px; flex: none; padding: 141px 0 0 158px; border-bottom: 0; }
.body-text {
  width: 1000px;
  transform: scaleX(1.104);
  transform-origin: 0 0;
  color: #151515;
  font: 24px/32.500px "Open Sans", "Noto Sans", sans-serif;
}
.page p { margin: 0 0 32.500px; height: 32.500px; white-space: pre; }
.page .in { padding-left: 71.300px; }
.page .navy { color: #0a1550; margin-bottom: 0; }
.page em { font-style: normal; color: #3a9a48; }
.page strong { font-weight: 400; color: #d9221c; }
.l2 { display: grid; grid-template-columns: 447px 82.700px 110px; }
.l3 { display: grid; grid-template-columns: 238.500px 39px 280px; }
.page code { font: 16.850px/36px "DejaVu Sans Mono", monospace; }
.wavy { text-decoration: underline wavy #c9433a 1px; text-underline-offset: 2px; text-decoration-skip-ink: none; }
.dbl { text-decoration: underline double #6f93dd 1.500px; text-underline-offset: 2px; text-decoration-skip-ink: none; }
.sel { display: inline-block; width: 366px; background: #dfe5f5; color: #3f4354; }
.page .sel strong { color: #c64b50; }
.page .sel em { color: #5aa372; }
.ibeam { position: absolute; left: 699px; top: 391px; }
.vscroll { width: 17px; background: #fafafa; border-left: 1px solid #e0e0e0; padding: 489px 0 0 3px; }
.vscroll i { display: block; width: 9px; height: 65px; border-radius: 5px; background: #c1c1c1; }
.hscroll { height: 15px; background: #fafafa; border-top: 1px solid #e4e4e4; }
.status {
  height: 23px;
  border-top: 1px solid #9c9c9c;
  background: linear-gradient(#e6e6e6, #d2d2d2);
  padding-left: 27px;
  display: grid;
  grid-template-columns: 95px 116px 39px 748px 24px 50px 51px 40px 40px 36px 18px 118px 29px 40px;
  align-items: center;
  font-size: 12.500px;
  letter-spacing: .37px;
  color: #4a4a4a;
}
.view-on { width: 40px; height: 22px; background: #a5a5a5; display: grid; place-content: center; }
.mark { position: absolute; right: 11px; bottom: 9px; font-size: 17px; line-height: 20px; font-weight: 600; color: rgba(255, 255, 255, .5); text-shadow: 0 0 2px rgba(0, 0, 0, .3); }

/* Taskbar */
.taskbar {
  height: 50px;
  display: flex;
  background: linear-gradient(90deg, #cbe0e4 0, #d6e2de 10%, #cbdfe5 22%, #cfdde6 45%, #d0dce6 60%, #ccdbe2 80%, #d0dbe5 100%);
  color: #111;
}
.cell { width: 62px; height: 50px; display: grid; place-content: center; }
.cell:nth-child(-n+3) { width: 60px; }
.cell:nth-child(4) { width: 63px; }
.cell:nth-child(5) { width: 61px; }
.run { background: linear-gradient(#0078d7, #0078d7) 50% 100% / 51px 3px no-repeat; }
.cell.cur { background: linear-gradient(#0078d7, #0078d7) 50% 100% / 62px 3px no-repeat, #ecf1f6; }
.tray {
  flex: 1;
  display: grid;
  grid-template-columns: 38px 48px 80px 32px 28px 30px 31px 30px 29px 33px 39px 87px 60px;
  padding-left: 238px;
  align-items: center;
  font-size: 17px;
}
.sun { width: 26px; height: 26px; border-radius: 50%; background: linear-gradient(150deg, #f0b62f, #f4720a); }
.k1, .k2 { font-size: 17.500px; }
.k3 { font-size: 15px; }
.clock { display: flex; flex-direction: column; align-items: center; font-size: 14.500px; line-height: 23px; width: 84px; }
.notif { width: 51px; height: 50px; background: #e0e7ec; display: grid; place-content: center; }
```
